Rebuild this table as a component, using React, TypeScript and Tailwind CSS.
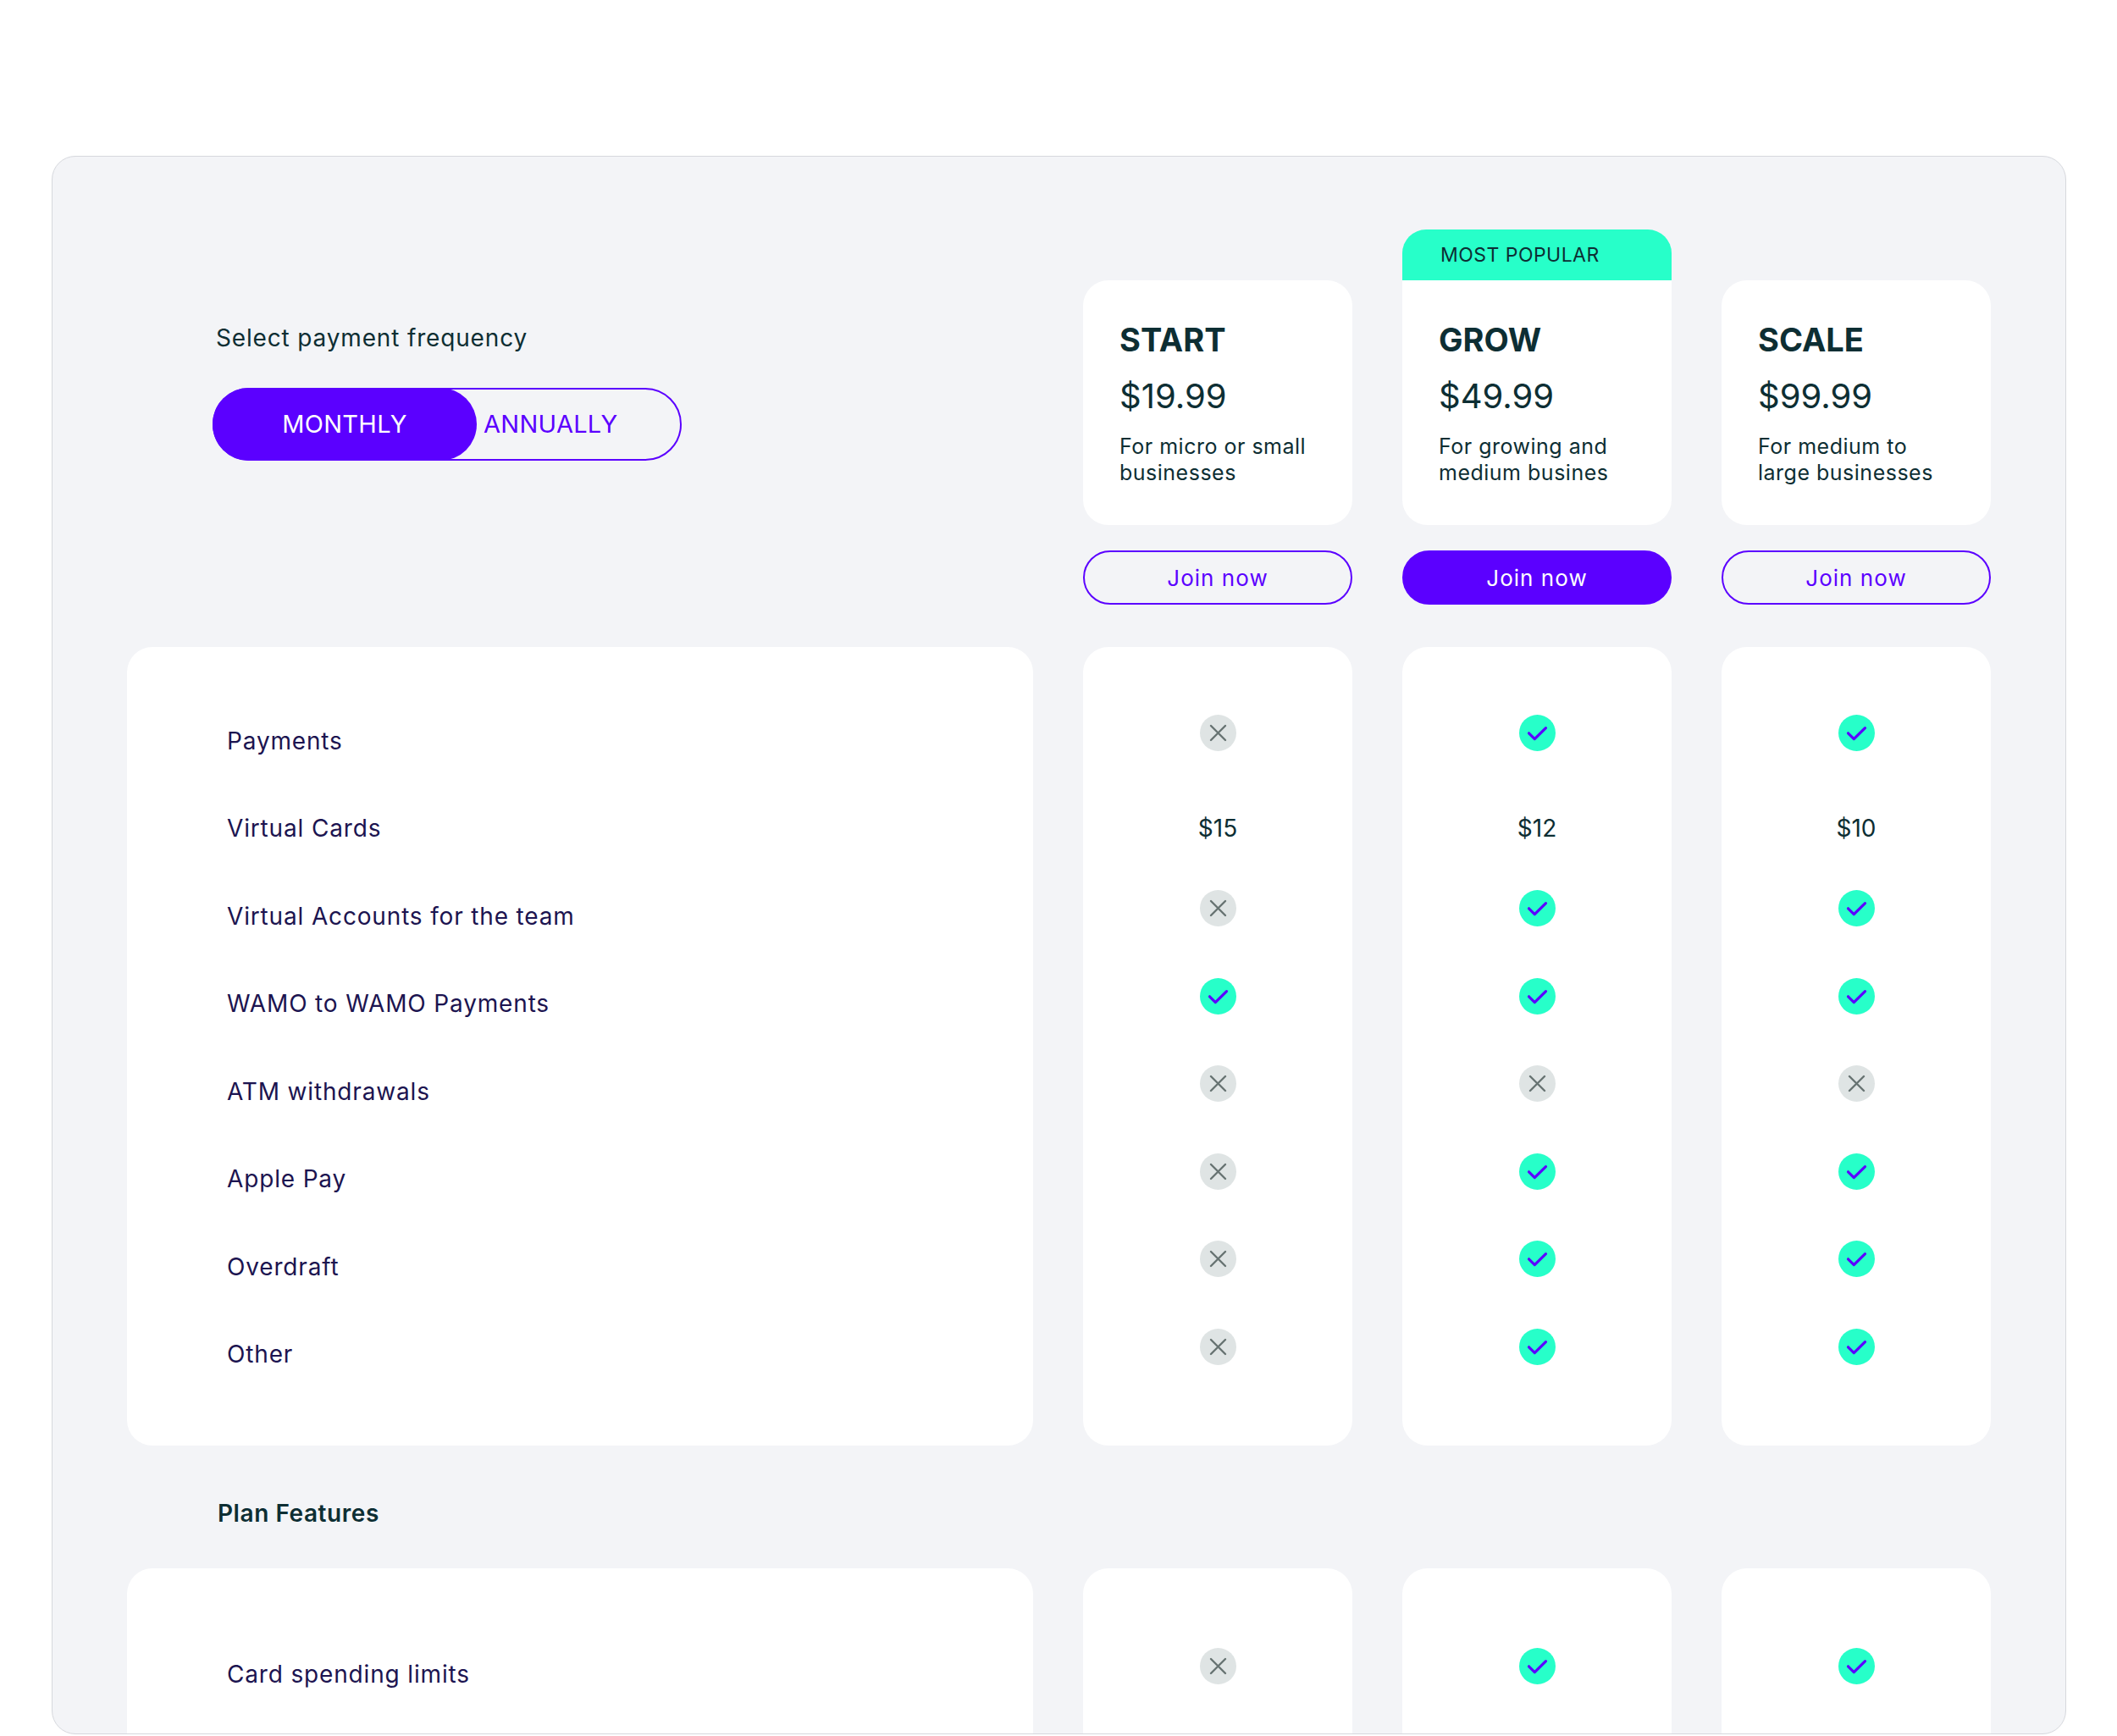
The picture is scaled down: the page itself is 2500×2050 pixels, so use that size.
import React from "react";

type Cell = "yes" | "no" | string;

const features: { label: string; values: Cell[] }[] = [
  { label: "Payments", values: ["no", "yes", "yes"] },
  { label: "Virtual Cards", values: ["$15", "$12", "$10"] },
  { label: "Virtual Accounts for the team", values: ["no", "yes", "yes"] },
  { label: "WAMO to WAMO Payments", values: ["yes", "yes", "yes"] },
  { label: "ATM withdrawals", values: ["no", "no", "no"] },
  { label: "Apple Pay", values: ["no", "yes", "yes"] },
  { label: "Overdraft", values: ["no", "yes", "yes"] },
  { label: "Other", values: ["no", "yes", "yes"] },
];

const planFeatures: { label: string; values: Cell[] }[] = [
  { label: "Card spending limits", values: ["no", "yes", "yes"] },
];

const plans = [
  { name: "START", price: "$19.99", lines: ["For micro or small", "businesses"], popular: false },
  { name: "GROW", price: "$49.99", lines: ["For growing and", "medium busines"], popular: true },
  { name: "SCALE", price: "$99.99", lines: ["For medium to", "large businesses"], popular: false },
];

function YesIcon() {
  return (
    <svg width="43" height="43" viewBox="0 0 43 43" className="-translate-y-[9px]">
      <circle cx="21.5" cy="21.5" r="21.5" fill="#27ffc9" />
      <path
        d="M11.5 21.8 L18.3 28.6 L31.5 15.6"
        fill="none"
        stroke="#5b00ff"
        strokeWidth="3.2"
        strokeLinecap="round"
        strokeLinejoin="round"
      />
    </svg>
  );
}

function NoIcon() {
  return (
    <svg width="43" height="43" viewBox="0 0 43 43" className="-translate-y-[9px]">
      <circle cx="21.5" cy="21.5" r="21.5" fill="#dfe4e4" />
      <path
        d="M13 13 L30 30 M30 13 L13 30"
        fill="none"
        stroke="#677372"
        strokeWidth="2.4"
        strokeLinecap="round"
      />
    </svg>
  );
}

function CellValue({ value }: { value: Cell }) {
  if (value === "yes") return <YesIcon />;
  if (value === "no") return <NoIcon />;
  return <span className="text-[28px] leading-[40px] text-[#0d2e33]">{value}</span>;
}

function FeatureTable({ rows, top }: { rows: { label: string; values: Cell[] }[]; top: string }) {
  return (
    <div className="grid grid-cols-[1070px_318px_318px_318px] gap-x-[59px]">
      {/* Labels */}
      <div className={`rounded-[30px] bg-white pb-[56px] pl-[118px] ${top}`}>
        {rows.map((row) => (
          <div
            key={row.label}
            className="flex h-[103.5px] items-center text-[28px] leading-[40px] tracking-[0.03em] text-[#1c1450]"
          >
            {row.label}
          </div>
        ))}
      </div>

      {/* Plan columns */}
      {[0, 1, 2].map((col) => (
        <div key={col} className={`rounded-[30px] bg-white pb-[56px] ${top}`}>
          {rows.map((row) => (
            <div key={row.label} className="flex h-[103.5px] items-center justify-center">
              <CellValue value={row.values[col]} />
            </div>
          ))}
        </div>
      ))}
    </div>
  );
}

export default function App() {
  return (
    <div className="min-h-[2050px] bg-white pl-[61px] pt-[184px] font-['Inter','Liberation_Sans',sans-serif]">
      <div className="h-[1864px] w-[2379px] overflow-hidden rounded-[28px] border border-[#d6d8dd] bg-[#f3f4f7] px-[88px] pt-[86px]">

        {/* Header: frequency toggle + plans */}

        <div className="grid grid-cols-[1070px_318px_318px_318px] gap-x-[59px]">
          <div className="pl-[101px] pt-[108px]">
            <p className="ml-[4px] text-[28px] leading-[40px] tracking-[0.03em] text-[#0d2e33]">
              Select payment frequency
            </p>

            <div className="mt-[39px] flex h-[86px] w-[554px] rounded-full border-2 border-[#5b00ff]">
              <button className="-ml-[2px] -mt-[2px] flex h-[86px] w-[312px] shrink-0 items-center justify-center rounded-full bg-[#5b00ff] text-[29px] tracking-[0.01em] text-white">
                MONTHLY
              </button>
              <button className="ml-[8px] flex items-center text-[29px] tracking-[0.01em] text-[#5b00ff]">
                ANNUALLY
              </button>
            </div>
          </div>

          {plans.map((plan) => (
            <div key={plan.name} className="flex flex-col">
              {plan.popular ? (
                <div className="flex h-[60px] items-center rounded-t-[28px] bg-[#27ffc9] pl-[45px] text-[23px] tracking-[0.02em] text-[#0d2e33]">
                  MOST POPULAR
                </div>
              ) : (
                <div className="h-[60px]" />
              )}

              <div
                className={`h-[289px] bg-white px-[43px] pt-[47px] text-[#0d2e33] ${
                  plan.popular ? "rounded-b-[30px]" : "rounded-[30px]"
                }`}
              >
                <h2 className="text-[38px] font-bold leading-[46px]">{plan.name}</h2>
                <p className="mt-[20px] text-[40px] leading-[48px]">{plan.price}</p>
                <p className="mt-[20px] text-[25px] leading-[31px] tracking-[0.02em]">
                  {plan.lines.map((line) => (
                    <span key={line} className="block">
                      {line}
                    </span>
                  ))}
                </p>
              </div>

              <button
                className={`mt-[30px] flex h-[64px] items-center justify-center rounded-full border-2 border-[#5b00ff] text-[26px] tracking-[0.04em] ${
                  plan.popular ? "bg-[#5b00ff] text-white" : "text-[#5b00ff]"
                }`}
              >
                Join now
              </button>
            </div>
          ))}
        </div>

        {/* Core features */}

        <div className="mt-[50px]">
          <FeatureTable rows={features} top="pt-[59px]" />
        </div>

        {/* Plan features */}

        <h3 className="mt-[60px] pl-[107px] text-[28px] font-semibold leading-[40px] tracking-[0.02em] text-[#0d2e33]">
          Plan Features
        </h3>

        <div className="mt-[45px]">
          <FeatureTable rows={planFeatures} top="pt-[73px]" />
        </div>

      </div>
    </div>
  );
}
